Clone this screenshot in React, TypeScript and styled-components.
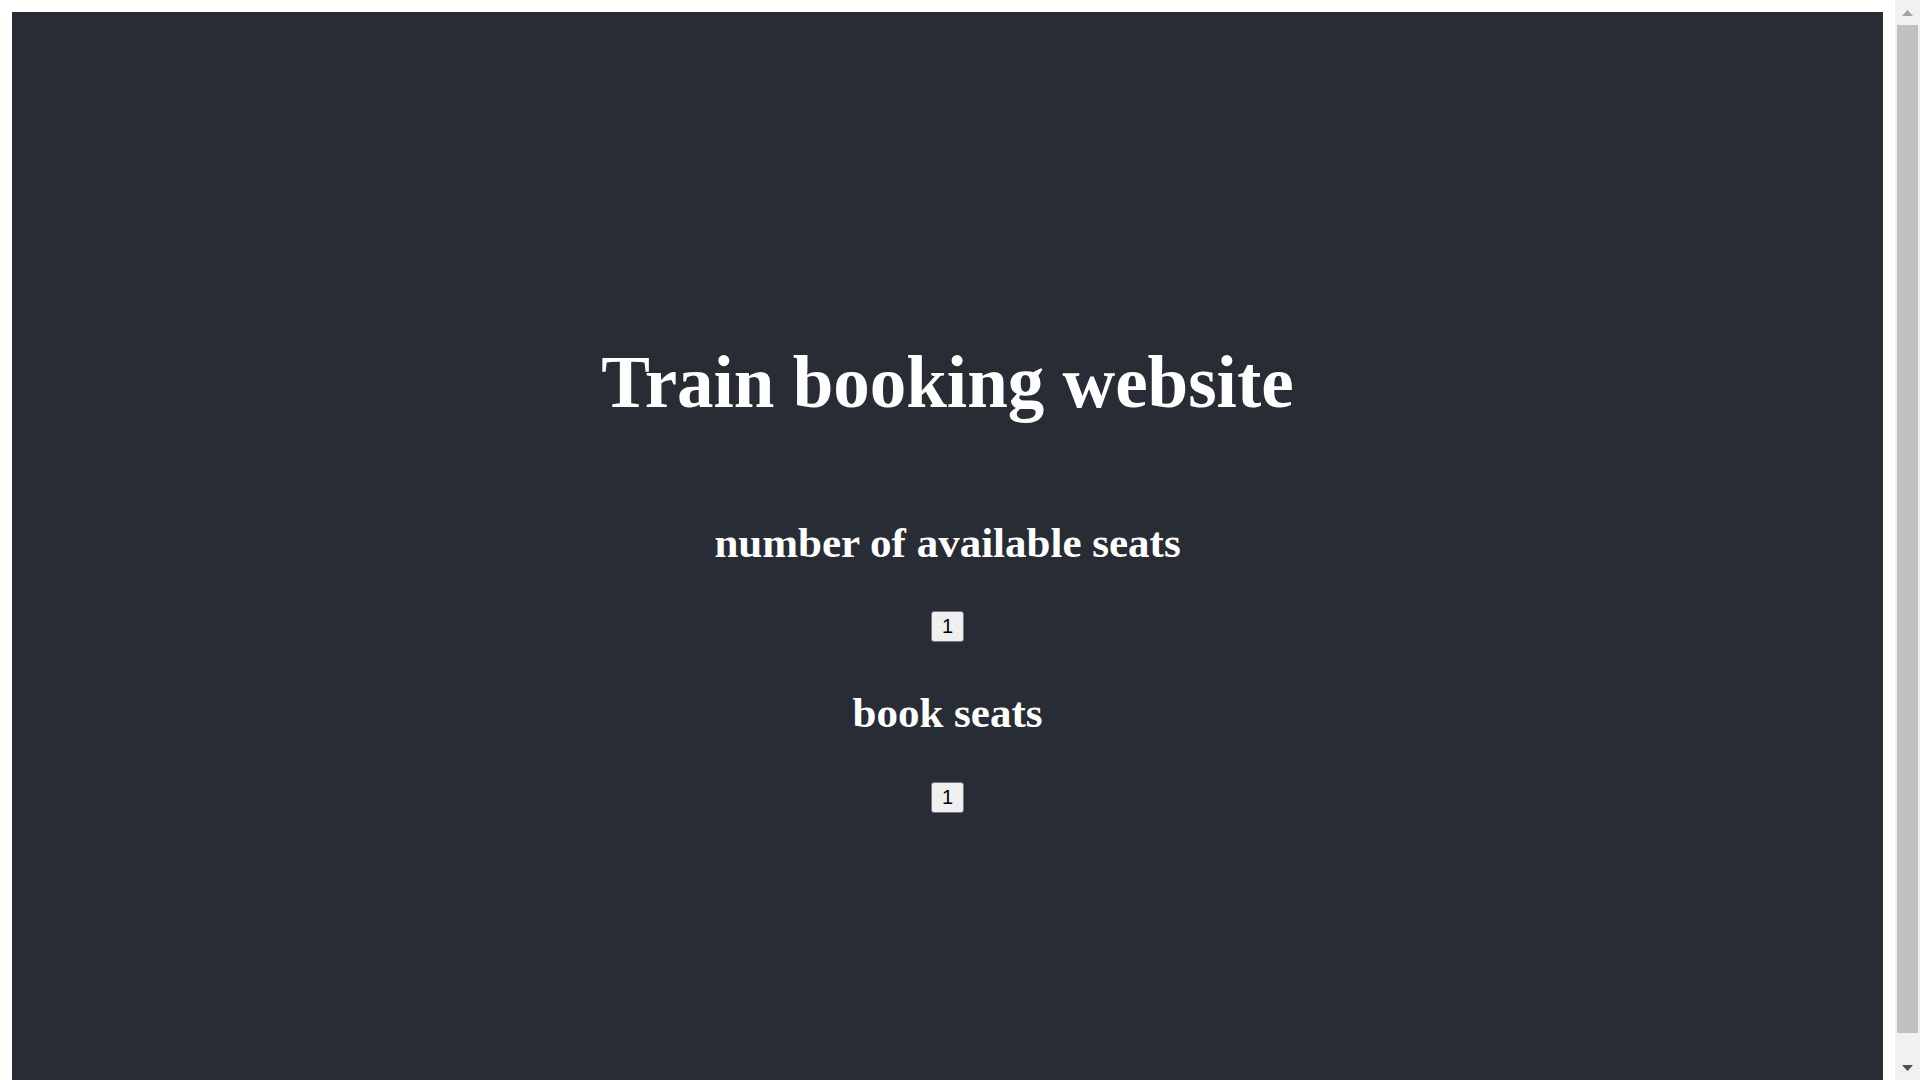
import React from "react";
import styled, { createGlobalStyle } from "styled-components";

const GlobalStyle = createGlobalStyle`
  html {
    background: #ffffff;
    overflow: hidden;
  }
  body {
    margin: 8px 33px 8px 8px;
    font-family: "Liberation Serif", "Times New Roman", serif;
  }
`;

const Header = styled.div`
  margin: 4px;
  height: 1080px;
  box-sizing: border-box;
  background: #282c34;
  color: #ffffff;
  display: flex;
  flex-direction: column;
  align-items: center;
  padding-top: 329px;
`;

const Title = styled.h1`
  margin: 0 0 93px 0;
  font-family: "Liberation Serif", "Times New Roman", serif;
  font-size: 73px;
  line-height: 1.15;
  font-weight: 700;
`;

const Subtitle = styled.h2<{ $gapTop?: number }>`
  margin: ${(p) => p.$gapTop ?? 0}px 0 44px 0;
  font-family: "Liberation Serif", "Times New Roman", serif;
  font-size: 43px;
  line-height: 1.15;
  font-weight: 700;
`;

const CountButton = styled.button`
  font-family: "Liberation Sans", Arial, sans-serif;
  font-size: 20px;
  line-height: 21px;
  padding: 4px 10px;
  color: #000000;
  background: #efefef;
  border: 1px solid #767676;
  border-radius: 3px;
  cursor: pointer;
`;

const Scrollbar = styled.div`
  position: fixed;
  top: 0;
  right: 0;
  width: 25px;
  height: 100vh;
  background: #f1f1f1;
  display: flex;
  flex-direction: column;
  align-items: center;
`;

const Arrow = styled.div`
  height: 25px;
  width: 25px;
  display: flex;
  align-items: center;
  justify-content: center;
  flex: none;
`;

const Thumb = styled.div`
  width: 21px;
  height: 1008px;
  background: #c1c1c1;
  flex: none;
`;

const Track = styled.div`
  flex: 1;
`;

export default function App() {
  const [available, setAvailable] = React.useState(1);
  const [booked, setBooked] = React.useState(1);
  return (
    <>
      <GlobalStyle />
      <Header>
        <Title>Train booking website</Title>
        <Subtitle>number of available seats</Subtitle>
        <CountButton onClick={() => setAvailable(available)}>{available}</CountButton>
        <Subtitle $gapTop={46}>book seats</Subtitle>
        <CountButton onClick={() => setBooked(booked)}>{booked}</CountButton>
      </Header>
      <Scrollbar>
        <Arrow>
          <svg width="11" height="6" viewBox="0 0 11 6">
            <polygon points="0,6 11,6 5.5,0" fill="#a3a3a3" />
          </svg>
        </Arrow>
        <Thumb />
        <Track />
        <Arrow>
          <svg width="11" height="6" viewBox="0 0 11 6">
            <polygon points="0,0 11,0 5.5,6" fill="#505050" />
          </svg>
        </Arrow>
      </Scrollbar>
    </>
  );
}
